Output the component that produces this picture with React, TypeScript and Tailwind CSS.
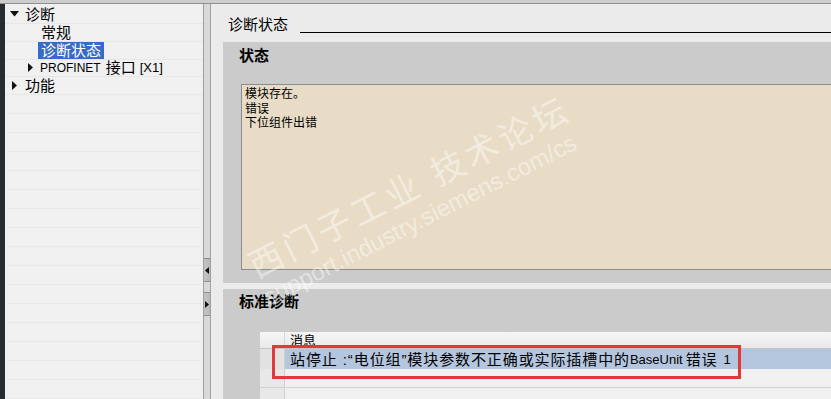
import React from "react";

function Arrow({ dir }: { dir: "down" | "right" }) {
  if (dir === "down") {
    return (
      <svg width="9" height="6" viewBox="0 0 9 6" className="shrink-0">
        <polygon points="0,0 9,0 4.5,5.5" fill="#111" />
      </svg>
    );
  }
  return (
    <svg width="5" height="9" viewBox="0 0 5 9" className="shrink-0">
      <polygon points="0,0 5,4.5 0,9" fill="#111" />
    </svg>
  );
}

function Tree() {
  const empty = Array.from({ length: 16 });
  return (
    <div className="w-[198px] bg-[#f0f0f0] pt-[2px] flex flex-col text-[15px] leading-none">
      <div className="h-[19px] border-b border-[#e7e7e7] flex items-center pl-[5px]">
        <Arrow dir="down" />
        <span className="ml-[6px]">诊断</span>
      </div>
      <div className="h-[19px] border-b border-[#e7e7e7] flex items-center pl-[36px]">
        <span>常规</span>
      </div>
      <div className="h-[19px] border-b border-[#e7e7e7] flex items-center pl-[33px]">
        <span className="bg-[#376bca] text-white px-[3px] h-[17px] flex items-center">诊断状态</span>
      </div>
      <div className="h-[19px] border-b border-[#e7e7e7] flex items-center pl-[23px]">
        <Arrow dir="right" />
        <span className="ml-[7px] text-[12px]">PROFINET</span>
        <span className="ml-[5px]">接口</span>
        <span className="ml-[4px] text-[13px]">[X1]</span>
      </div>
      <div className="h-[19px] border-b border-[#e7e7e7] flex items-center pl-[7px]">
        <Arrow dir="right" />
        <span className="ml-[8px]">功能</span>
      </div>
      {empty.map((_, i) => (
        <div key={i} className="h-[19px] shrink-0 border-b border-[#e7e7e7] mx-[2px]" />
      ))}
    </div>
  );
}

function Splitter() {
  return (
    <div className="w-[8px] bg-[#d9d9d9] border-l border-[#8a8a8a] border-r border-[#a0a0a0] flex flex-col pt-[254px] gap-[10px]">
      <div className="h-[24px] bg-gradient-to-r from-[#c4c4c4] to-[#b8b8b8] border-y border-[#8e8e8e] flex items-center justify-center">
        <svg width="4" height="7" viewBox="0 0 4 7">
          <polygon points="4,0 0,3.5 4,7" fill="#111" />
        </svg>
      </div>
      <div className="h-[24px] bg-gradient-to-r from-[#c4c4c4] to-[#b8b8b8] border-y border-[#8e8e8e] flex items-center justify-center">
        <svg width="4" height="7" viewBox="0 0 4 7">
          <polygon points="0,0 4,3.5 0,7" fill="#111" />
        </svg>
      </div>
    </div>
  );
}

function Content() {
  return (
    <div className="flex-1 flex flex-col pl-[12px] min-w-0">
      <div className="h-[38px] shrink-0 flex items-start pt-[13px] pl-[5px]">
        <span className="text-[15px] leading-[16px]">诊断状态</span>
        <div className="flex-1 h-[16px] border-b border-black ml-[12px]" />
      </div>

      <div className="h-[241px] shrink-0 bg-[#cbcbcb] flex flex-col">
        <div className="h-[42px] shrink-0 pl-[16px] pt-[5px] font-bold text-[15px] leading-[18px]">状态</div>
        <div className="ml-[18px] h-[186px] border border-r-0 border-[#8c8c8c] bg-[#e8dcc6] pt-[2px] pl-[3px] text-[12px] leading-[14.5px]">
          <div>模块存在。</div>
          <div>错误</div>
          <div>下位组件出错</div>
        </div>
      </div>

      <div className="h-[6px] shrink-0 bg-[#ececec]" />

      <div className="flex-1 bg-[#cbcbcb] flex flex-col">
        <div className="h-[43px] shrink-0 pl-[16px] pt-[4px] font-bold text-[15px] leading-[18px]">标准诊断</div>
        <div className="ml-[37px] flex-1 flex flex-col bg-[#f0f0f0]">
          <div className="h-[17px] shrink-0 flex border-b border-[#c6c6c6] bg-gradient-to-b from-[#f6f6f6] to-[#e9e9e9]">
            <div className="w-[25px] border-r border-[#d8d8d8]" />
            <div className="pl-[5px] text-[13px] leading-[17px]">消息</div>
          </div>
          <div className="h-[20px] shrink-0 flex">
            <div className="w-[25px] bg-[#e2e2e2] border-r border-[#d0d0d0]" />
            <div className="flex-1 bg-[#b4c5de] pl-[5px] pt-[2px] flex items-center text-[15px] tracking-[0.9px] whitespace-nowrap">
              站停止 :“电位组”模块参数不正确或实际插槽中的
              <span className="text-[13px] tracking-normal">BaseUnit</span>
              <span className="ml-[3px]">错误</span>
              <span className="ml-[6px] text-[13px]">1</span>
            </div>
          </div>
          <div className="h-[19px] shrink-0 flex border-b border-[#d2d2d2]">
            <div className="w-[25px] bg-[#e8e8e8] border-r border-[#d0d0d0]" />
          </div>
          <div className="h-[19px] shrink-0 flex border-b border-[#d2d2d2]">
            <div className="w-[25px] bg-[#e8e8e8] border-r border-[#d0d0d0]" />
          </div>
        </div>
      </div>
    </div>
  );
}

export default function App() {
  return (
    <div className="relative w-[831px] h-[399px] overflow-hidden flex flex-col bg-[#ebebeb] text-black font-['Liberation_Sans','Noto_Sans_CJK_SC',sans-serif]">
      <div className="h-[4px] shrink-0 bg-[#cdcdcd] border-b border-[#8e8e8e]" />
      <div className="flex flex-1 min-h-0">
        <div className="w-[5px] bg-[#272c30]" />
        <Tree />
        <Splitter />
        <Content />
      </div>

      {/* watermark */}
      <span className="absolute left-[410px] top-[188px] -translate-x-1/2 -translate-y-1/2 rotate-[-27deg] whitespace-nowrap text-[34px] tracking-[4px] text-white/45 pointer-events-none">
        西门子工业 技术论坛
      </span>
      <span className="absolute left-[420px] top-[220px] -translate-x-1/2 -translate-y-1/2 rotate-[-27deg] whitespace-nowrap text-[24px] text-white/45 pointer-events-none">
        support.industry.siemens.com/cs
      </span>

      {/* red highlight */}
      <div className="absolute left-[272px] top-[345px] w-[469px] h-[34px] border-[3px] border-[#e2383b]" />
    </div>
  );
}
